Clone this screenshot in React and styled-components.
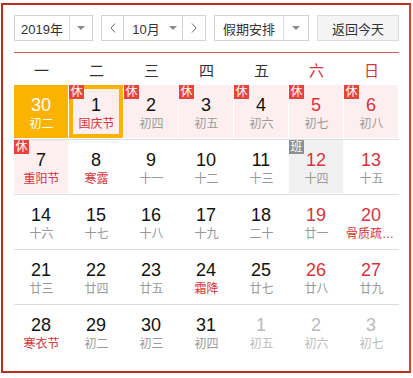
import React from 'react';
import styled, { createGlobalStyle } from 'styled-components';

const GlobalStyle = createGlobalStyle`
  html, body { margin: 0; padding: 0; background: #fff; }
  body { font-family: "Liberation Sans", "Noto Sans CJK SC", sans-serif; }
`;

const Frame = styled.div`
  box-sizing: border-box;
  margin: 3px 0 0 1px;
  width: 410px;
  height: 370px;
  border: 2px solid #bf2a20;
  border-right-color: #e13f1f;
  padding: 10px 0 0 11px;
`;

const Toolbar = styled.div`
  display: flex;
  gap: 8px;
  width: 385px;
  height: 26px;
  font-size: 13px;
  color: #333;
`;

const Select = styled.div`
  box-sizing: border-box;
  display: flex;
  width: ${p => p.$w}px;
  border: 1px solid #d2d2d2;
  background: #fff;
`;

const SelectLabel = styled.div`
  flex: 1;
  display: flex;
  align-items: center;
  justify-content: center;
`;

const ArrowBox = styled.div`
  box-sizing: border-box;
  width: ${p => p.$w}px;
  display: flex;
  align-items: center;
  justify-content: center;
  border-left: 1px solid #dcdcdc;
`;

const Caret = styled.span`
  width: 0;
  height: 0;
  border-left: 4px solid transparent;
  border-right: 4px solid transparent;
  border-top: 4px solid #8c8c8c;
`;

const NavButton = styled.div`
  box-sizing: border-box;
  width: ${p => p.$w}px;
  display: flex;
  align-items: center;
  justify-content: center;
  border-${p => (p.$side === 'left' ? 'right' : 'left')}: 1px solid #d2d2d2;
`;

const MonthPick = styled.div`
  flex: 1;
  display: flex;
  align-items: center;
  justify-content: center;
  gap: 9px;
  padding-left: 3px;
`;

const TodayButton = styled.div`
  box-sizing: border-box;
  width: 82px;
  display: flex;
  align-items: center;
  justify-content: center;
  border: 1px solid #dadada;
  background: #f4f4f4;
`;

const Rule = styled.div`
  margin-top: 11px;
  width: 385px;
  height: 1px;
  background: #d95757;
`;

const WeekHeader = styled.div`
  display: grid;
  grid-template-columns: repeat(7, 55px);
  height: 32px;
  align-items: center;
  font-size: 15px;
`;

const WeekDay = styled.div`
  text-align: center;
  color: ${p => (p.$red ? '#d4343c' : '#333')};
`;

const Row = styled.div`
  display: grid;
  grid-template-columns: repeat(7, 55px);
  width: 385px;
  height: 55px;
  box-sizing: border-box;
  border-bottom: ${p => (p.$last ? 'none' : '1px solid #dcdcdc')};
`;

const bgFor = p => {
  if (p.$today) return '#fbb300';
  if (p.$rest) return '#fdefef';
  if (p.$work) return '#f1f1f1';
  return '#fff';
};

const Cell = styled.div`
  position: relative;
  box-sizing: border-box;
  border-right: 1px solid #fff;
  border-bottom: 1px solid #fff;
  background: ${bgFor};
  padding-top: 10px;
  text-align: center;
  &::after {
    content: '';
    display: ${p => (p.$selected ? 'block' : 'none')};
    position: absolute;
    inset: 0;
    border: 4px solid #fbb300;
  }
`;

const Num = styled.div`
  font-size: 18px;
  line-height: 21px;
  color: ${p => p.$color};
`;

const Lunar = styled.div`
  font-size: 12px;
  line-height: 17px;
  padding: 0 1px 0 2px;
  white-space: nowrap;
  overflow: hidden;
  text-overflow: ellipsis;
  color: ${p => p.$color};
`;

const Badge = styled.span`
  position: absolute;
  top: 0;
  left: 0;
  z-index: 2;
  width: 15px;
  height: 14px;
  font-size: 12px;
  line-height: 14px;
  text-align: center;
  color: #fff;
  background: ${p => (p.$kind === 'work' ? '#8e8e8e' : '#e8433a')};
`;

const Chevron = ({ dir }) => (
  <svg width="6" height="10" viewBox="0 0 6 10">
    <polyline
      points={dir === 'left' ? '5,0.5 1,5 5,9.5' : '1,0.5 5,5 1,9.5'}
      fill="none"
      stroke="#666"
      strokeWidth="1"
    />
  </svg>
);

const C = (d, l, o = {}) => ({ d, l, ...o });

const weeks = [
  [
    C(30, '初二', { today: true }),
    C(1, '国庆节', { fest: true, rest: true, selected: true }),
    C(2, '初四', { rest: true }),
    C(3, '初五', { rest: true }),
    C(4, '初六', { rest: true }),
    C(5, '初七', { rest: true }),
    C(6, '初八', { rest: true }),
  ],
  [
    C(7, '重阳节', { fest: true, rest: true }),
    C(8, '寒露', { fest: true }),
    C(9, '十一'),
    C(10, '十二'),
    C(11, '十三'),
    C(12, '十四', { work: true }),
    C(13, '十五'),
  ],
  [
    C(14, '十六'),
    C(15, '十七'),
    C(16, '十八'),
    C(17, '十九'),
    C(18, '二十'),
    C(19, '廿一'),
    C(20, '骨质疏松日', { fest: true }),
  ],
  [
    C(21, '廿三'),
    C(22, '廿四'),
    C(23, '廿五'),
    C(24, '霜降', { fest: true }),
    C(25, '廿七'),
    C(26, '廿八'),
    C(27, '廿九'),
  ],
  [
    C(28, '寒衣节', { fest: true }),
    C(29, '初二'),
    C(30, '初三'),
    C(31, '初四'),
    C(1, '初五', { other: true }),
    C(2, '初六', { other: true }),
    C(3, '初七', { other: true }),
  ],
];

const days = ['一', '二', '三', '四', '五', '六', '日'];
const RED = '#d4343c';

function numColor(c, i) {
  if (c.today) return '#fff';
  if (c.other) return '#bbb';
  if (i >= 5) return RED;
  return '#111';
}

function lunarColor(c) {
  if (c.today) return '#fff';
  if (c.other) return '#bbb';
  if (c.fest) return RED;
  return '#999';
}

export default function App() {
  return (
    <>
      <GlobalStyle />
      <Frame>
        <Toolbar>
          <Select $w={79}>
            <SelectLabel>2019年</SelectLabel>
            <ArrowBox $w={23}><Caret /></ArrowBox>
          </Select>
          <Select $w={105}>
            <NavButton $w={22} $side="left"><Chevron dir="left" /></NavButton>
            <MonthPick>
              <span>10月</span>
              <Caret />
            </MonthPick>
            <NavButton $w={23} $side="right"><Chevron dir="right" /></NavButton>
          </Select>
          <Select $w={95}>
            <SelectLabel>假期安排</SelectLabel>
            <ArrowBox $w={25}><Caret /></ArrowBox>
          </Select>
          <TodayButton>返回今天</TodayButton>
        </Toolbar>
        <Rule />
        <WeekHeader>
          {days.map((d, i) => (
            <WeekDay key={d} $red={i >= 5}>{d}</WeekDay>
          ))}
        </WeekHeader>
        {weeks.map((w, r) => (
          <Row key={r} $last={r === weeks.length - 1}>
            {w.map((c, i) => (
              <Cell
                key={i}
                $today={c.today}
                $rest={c.rest}
                $work={c.work}
                $selected={c.selected}
              >
                {c.rest && <Badge $kind="rest">休</Badge>}
                {c.work && <Badge $kind="work">班</Badge>}
                <Num $color={numColor(c, i)}>{c.d}</Num>
                <Lunar $color={lunarColor(c)}>{c.l}</Lunar>
              </Cell>
            ))}
          </Row>
        ))}
      </Frame>
    </>
  );
}
